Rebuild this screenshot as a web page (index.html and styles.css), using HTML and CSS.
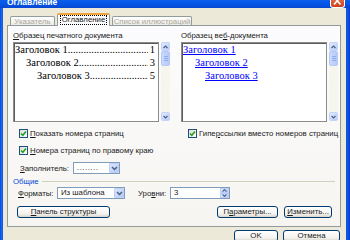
FILE: index.html
```html
<!DOCTYPE html>
<html lang="ru">
<head>
    <meta charset="UTF-8">
    <title>Оглавление</title>
    <link rel="stylesheet" href="styles.css">
</head>
<body>
<div class="window">
    <div class="titlebar">
        <span class="title">Оглавление</span>
        <span class="close">
            <svg width="13" height="7" viewBox="0 0 13 7"><path d="M3 -3 L9.5 4.5 M9.5 -3 L3 4.5" stroke="#fff" stroke-width="1.6"/></svg>
        </span>
    </div>
    <div class="dialog">
        <!-- вкладки -->
        <div class="tabs">
            <div class="tab tab-1 disabled">Указатель</div>
            <div class="tab tab-2 active"><span class="focus">Оглавление</span></div>
            <div class="tab tab-3 disabled">Список иллюстраций</div>
        </div>
        <div class="panel">
            <div class="columns">
                <!-- печатный документ -->
                <div class="col col-print">
                    <div class="caption"><u>О</u>бразец печатного документа</div>
                    <div class="sample">
                        <div class="sample-box">
                            <div class="toc-line lvl1"><span>Заголовок 1</span><span class="dots">..............................................</span><span class="page">1</span></div>
                            <div class="toc-line lvl2"><span>Заголовок 2</span><span class="dots">..............................................</span><span class="page">3</span></div>
                            <div class="toc-line lvl3"><span>Заголовок 3</span><span class="dots">..............................................</span><span class="page">5</span></div>
                        </div>
                        <div class="scrollbar">
                            <div class="sb-btn"><svg width="5" height="4" viewBox="0 0 5 4"><path d="M0.5 3 L2.5 1 L4.5 3" fill="none" stroke="#4d6185" stroke-width="1.2"/></svg></div>
                            <div class="sb-thumb"><span></span><span></span><span></span></div>
                            <div class="sb-track"></div>
                            <div class="sb-btn"><svg width="5" height="4" viewBox="0 0 5 4"><path d="M0.5 1 L2.5 3 L4.5 1" fill="none" stroke="#4d6185" stroke-width="1.2"/></svg></div>
                        </div>
                    </div>
                    <div class="check">
                        <span class="box"><svg width="7" height="7" viewBox="0 0 7 7"><path d="M1 3.5 L2.8 5.3 L6 1.5" fill="none" stroke="#21a121" stroke-width="1.6"/></svg></span>
                        <span><u>П</u>оказать номера страниц</span>
                    </div>
                    <div class="check">
                        <span class="box"><svg width="7" height="7" viewBox="0 0 7 7"><path d="M1 3.5 L2.8 5.3 L6 1.5" fill="none" stroke="#21a121" stroke-width="1.6"/></svg></span>
                        <span><u>Н</u>омера страниц по правому краю</span>
                    </div>
                    <div class="field">
                        <span class="lbl-filler"><u>З</u>аполнитель:</span>
                        <div class="combo combo-filler">
                            <span class="combo-text">........</span>
                            <span class="combo-btn"><svg width="7" height="5" viewBox="0 0 7 5"><path d="M1 1 L3.5 3.5 L6 1" fill="none" stroke="#4d6185" stroke-width="1.5"/></svg></span>
                        </div>
                    </div>
                </div>
                <!-- веб-документ -->
                <div class="col col-web">
                    <div class="caption">Образец ве<u>б</u>-документа</div>
                    <div class="sample">
                        <div class="sample-box">
                            <div class="toc-line lvl1"><a href="#">Заголовок 1</a></div>
                            <div class="toc-line lvl2"><a href="#">Заголовок 2</a></div>
                            <div class="toc-line lvl3"><a href="#">Заголовок 3</a></div>
                        </div>
                        <div class="scrollbar">
                            <div class="sb-btn"><svg width="5" height="4" viewBox="0 0 5 4"><path d="M0.5 3 L2.5 1 L4.5 3" fill="none" stroke="#4d6185" stroke-width="1.2"/></svg></div>
                            <div class="sb-thumb"><span></span><span></span><span></span></div>
                            <div class="sb-track"></div>
                            <div class="sb-btn"><svg width="5" height="4" viewBox="0 0 5 4"><path d="M0.5 1 L2.5 3 L4.5 1" fill="none" stroke="#4d6185" stroke-width="1.2"/></svg></div>
                        </div>
                    </div>
                    <div class="check check-web">
                        <span class="box"><svg width="7" height="7" viewBox="0 0 7 7"><path d="M1 3.5 L2.8 5.3 L6 1.5" fill="none" stroke="#21a121" stroke-width="1.6"/></svg></span>
                        <span>Гипе<u>р</u>ссылки вместо номеров страниц</span>
                    </div>
                </div>
            </div>
            <!-- общие -->
            <div class="group-title"><span>Общие</span><span class="group-line"></span></div>
            <div class="row">
                <span class="lbl-formats"><u>Ф</u>орматы:</span>
                <div class="combo combo-formats">
                    <span class="combo-text">Из шаблона</span>
                    <span class="combo-btn"><svg width="7" height="5" viewBox="0 0 7 5"><path d="M1 1 L3.5 3.5 L6 1" fill="none" stroke="#4d6185" stroke-width="1.5"/></svg></span>
                </div>
                <span class="lbl-levels">Уро<u>в</u>ни:</span>
                <div class="combo spin">
                    <span class="combo-text">3</span>
                    <span class="spin-btns">
                        <span class="spin-btn"><svg width="5" height="3" viewBox="0 0 5 3"><path d="M0.5 2.6 L2.5 0.6 L4.5 2.6" fill="none" stroke="#4d6185" stroke-width="1.1"/></svg></span>
                        <span class="spin-btn"><svg width="5" height="3" viewBox="0 0 5 3"><path d="M0.5 0.4 L2.5 2.4 L4.5 0.4" fill="none" stroke="#4d6185" stroke-width="1.1"/></svg></span>
                    </span>
                </div>
            </div>
            <div class="row buttons">
                <button type="button" class="btn btn-outline"><u>П</u>анель структуры</button>
                <button type="button" class="btn btn-params">П<u>а</u>раметры...</button>
                <button type="button" class="btn btn-edit"><u>И</u>зменить...</button>
            </div>
        </div>
        <div class="footer">
            <button type="button" class="btn btn-ok">OK</button>
            <button type="button" class="btn btn-cancel">Отмена</button>
        </div>
    </div>
</div>
</body>
</html>
```

FILE: styles.css
```css
* { box-sizing: border-box; }
body { margin: 0; font-family: "Liberation Sans", Arial, sans-serif; font-size: 7.8px; color: #1a1a1a; background: #ece9d8; }
u { text-decoration: underline; }

/* окно */
.window {
    width: 350px;
    height: 240px;
    overflow: hidden;
    display: flex;
    flex-direction: column;
    background: linear-gradient(to right, #0831d9 0, #1c6cf0 1px, #0b59e6 3px, #0b59e6 346px, #0a4fd8 349px, #0831d9 350px);
}
.titlebar {
    height: 8px;
    flex: none;
    display: flex;
    align-items: flex-end;
    padding: 0 5px 0 7px;
    overflow: hidden;
    background: linear-gradient(#0a5fec, #0553e2 60%, #0846cf);
}
.title { color: #fff; font-weight: bold; font-size: 8.5px; line-height: 10px; margin-bottom: 1px; }
.close {
    margin-left: auto;
    width: 15px;
    height: 8px;
    display: flex;
    justify-content: center;
    border: 1px solid #fff;
    border-top: none;
    border-radius: 0 0 3px 3px;
    background: linear-gradient(#e2663f, #c8401c);
}

.dialog {
    flex: 1;
    margin: 0 4px 0 3px;
    padding: 5px 5px 0 4px;
    background: #ece9d8;
}

/* вкладки */
.tabs { display: flex; align-items: flex-end; gap: 2px; padding-left: 3px; height: 12px; }
.tab {
    height: 9px;
    display: flex;
    align-items: center;
    justify-content: center;
    border: 1px solid #919b9c;
    border-bottom: none;
    border-radius: 2px 2px 0 0;
    background: linear-gradient(#ffffff, #ecebe6);
    white-space: nowrap;
}
.tab.disabled { color: #aca899; }
.tab-1 { width: 45px; }
.tab-2 { width: 53px; }
.tab-3 { width: 80px; }
.tab.active {
    height: 13px;
    margin-bottom: -1px;
    border-top: 2px solid #f2a43e;
    background: #fcfcfe;
    position: relative;
    z-index: 1;
    padding-bottom: 1px;
}
.focus { outline: 1px dotted #000; outline-offset: 0; line-height: 8px; padding: 0 1px; }

.panel {
    height: 202px;
    border: 1px solid #919b9c;
    background: linear-gradient(#fcfcfe, #f6f5f1);
    padding: 5px 5px 0 5px;
}

.columns { display: flex; gap: 11px; align-items: flex-start; }
.col-print { width: 157px; }
.col-web { flex: 1; }
.caption { height: 9px; line-height: 9px; margin-bottom: 2px; white-space: nowrap; }

/* образцы */
.sample { display: flex; gap: 2px; height: 80px; }
.sample-box {
    flex: 1;
    min-width: 0;
    border: 1px solid #8c8c8c;
    box-shadow: inset 1px 1px 0 #5a5a5a;
    background: #fff;
    padding: 0 3px 0 1px;
}
.toc-line {
    display: flex;
    font-family: "Liberation Serif", "Times New Roman", serif;
    font-size: 10.5px;
    line-height: 13px;
    white-space: nowrap;
    color: #000;
}
.toc-line .dots { flex: 1; overflow: hidden; min-width: 0; }
.toc-line .page { margin-left: 2px; }
.toc-line a { color: #0000ff; text-decoration: underline; }
.col-web .sample-box { padding-left: 1px; }
.lvl2 { padding-left: 11px; }
.lvl3 { padding-left: 22px; }
.col-web .lvl2 { padding-left: 12px; }
.col-web .lvl3 { padding-left: 22px; }

.scrollbar { width: 9px; height: 79px; display: flex; flex-direction: column; background: #f6f5ee; }
.sb-btn {
    height: 9px;
    display: flex;
    align-items: center;
    justify-content: center;
    border: 1px solid #c3d3fd;
    border-radius: 2px;
    background: linear-gradient(135deg, #e3ebfe, #b9cbf7);
}
.sb-thumb {
    height: 15px;
    display: flex;
    flex-direction: column;
    align-items: center;
    justify-content: center;
    gap: 1px;
    border: 1px solid #b4c8f6;
    border-radius: 2px;
    background: linear-gradient(to right, #cbdafc, #b6caf8);
}
.sb-thumb span { width: 4px; height: 1px; background: #8eadf0; }
.sb-track { flex: 1; }

/* флажки */
.check { display: flex; align-items: center; gap: 2px; height: 11px; margin-top: 6px; padding-left: 6px; white-space: nowrap; }
.check-web { padding-left: 7px; }
.box {
    width: 9px;
    height: 9px;
    flex: none;
    display: flex;
    align-items: center;
    justify-content: center;
    border: 1px solid #1c5180;
    background: linear-gradient(135deg, #dcdcd7, #ffffff);
}

.field { display: flex; align-items: center; margin-top: 6px; padding-left: 7px; }
.lbl-filler { width: 53px; }

.combo { display: flex; height: 12px; border: 1px solid #7f9db9; background: #fff; }
.combo-text { flex: 1; padding-left: 3px; line-height: 10px; white-space: nowrap; }
.combo-btn {
    width: 10px;
    display: flex;
    align-items: center;
    justify-content: center;
    border: 1px solid #bccdf7;
    border-radius: 1px;
    background: linear-gradient(135deg, #dce6fe, #b7caf6);
}
.combo-filler { width: 47px; }
.combo-filler .combo-text { letter-spacing: 0.5px; }

/* общие */
.group-title { display: flex; align-items: center; gap: 3px; height: 9px; margin-top: 3px; color: #0046d5; }
.group-line { flex: 1; height: 1px; background: #d0d0bf; }

.row { display: flex; align-items: center; padding-left: 5px; margin-top: 1px; }
.lbl-formats { width: 39px; }
.combo-formats { width: 68px; }
.lbl-levels { width: 32px; margin-left: 13px; }
.spin { width: 60px; }
.spin-btns { width: 9px; display: flex; flex-direction: column; }
.spin-btn {
    flex: 1;
    display: flex;
    align-items: center;
    justify-content: center;
    border: 1px solid #bccdf7;
    background: linear-gradient(135deg, #dce6fe, #b7caf6);
}

/* кнопки */
.btn {
    height: 12px;
    padding: 0;
    border: 1px solid #003c74;
    border-radius: 3px;
    background: linear-gradient(#ffffff, #f3f2ee 70%, #d8d3c8);
    font-family: "Liberation Sans", Arial, sans-serif;
    font-size: 7.8px;
    line-height: 10px;
    color: #1a1a1a;
    text-align: center;
    white-space: nowrap;
}
.buttons { margin-top: 7px; padding-left: 4px; padding-right: 3px; }
.btn-outline { width: 93px; }
.btn-params { width: 61px; margin-left: auto; }
.btn-edit { width: 48px; margin-left: 6px; }

.footer { display: flex; justify-content: flex-end; gap: 5px; margin-top: 3px; padding-right: 1px; }
.btn-ok { width: 44px; }
.btn-cancel { width: 57px; }
```
